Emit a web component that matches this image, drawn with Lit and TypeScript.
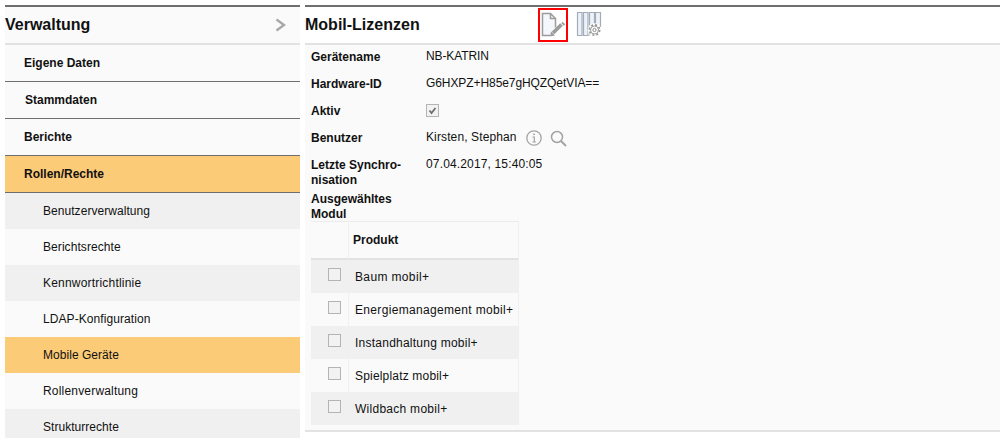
import { LitElement, html, css } from "lit";
import { customElement } from "lit/decorators.js";

const mainItems = [
  { name: "Eigene Daten", indent: 0 },
  { name: "Stammdaten", indent: 1 },
  { name: "Berichte", indent: 0 },
  { name: "Rollen/Rechte", indent: 0 },
];
const subItems = [
  { name: "Benutzerverwaltung", track: 0.05 },
  { name: "Berichtsrechte", track: 0.07 },
  { name: "Kennwortrichtlinie", track: 0.2 },
  { name: "LDAP-Konfiguration", track: 0.08 },
  { name: "Mobile Geräte", track: 0.04 },
  { name: "Rollenverwaltung", track: 0.19 },
  { name: "Strukturrechte", track: 0.04 },
];
const products = [
  { name: "Baum mobil+", track: 0.36 },
  { name: "Energiemanagement mobil+", track: 0.33 },
  { name: "Instandhaltung mobil+", track: 0.24 },
  { name: "Spielplatz mobil+", track: 0.18 },
  { name: "Wildbach mobil+", track: 0.27 },
];

@customElement("app-root")
export class AppRoot extends LitElement {
  static styles = css`
    :host { display: block; width: 1000px; height: 438px; overflow: hidden; background: #fff; color: #111; font-family: "Liberation Sans", Arial, sans-serif; font-size: 12px; }
    * { box-sizing: border-box; }
    .page { display: flex; gap: 5px; height: 438px; padding: 5px 0 0 5px; }
    .side { width: 295px; flex: none; background: #fafafa; border-top: 2px solid #6e6e6e; height: 433px; overflow: hidden; }
    .side-head { height: 38px; display: flex; align-items: center; justify-content: space-between; border-bottom: 2px solid #e2e2e2; font-size: 16px; font-weight: bold; padding: 0 14px 0 0; }
    .main-item { height: 37px; border-bottom: 1px solid #6e6e6e; padding: 0 0 1px 19px; display: flex; align-items: center; font-weight: bold; }
    .main-item.active { background: #fccb78; }
    .main-item.nudge { padding-left: 20px; }
    .sub-item { height: 36px; padding: 0 0 1px 38px; display: flex; align-items: center; flex: none; }
    .sub-item:nth-child(odd) { background: #f0f0f0; }
    .sub-item.active { background: #fccb78; }
    .panel { flex: 1; height: 427px; background: #fafafa; border-top: 2px solid #6e6e6e; border-bottom: 2px solid #e2e2e2; }
    .panel-head { height: 38px; background: #fff; border-bottom: 2px solid #e2e2e2; display: flex; align-items: center; }
    .panel-title { width: 233px; font-size: 16px; font-weight: bold; }
    .tool { width: 30px; height: 34px; display: flex; align-items: center; justify-content: center; }
    .tool.sel { border: 2px solid #f00; }
    .tool + .tool { margin-left: 6px; }
    .body { padding: 0 0 0 6px; }
    .field { display: grid; grid-template-columns: 115px 1fr; }
    .lbl { font-weight: bold; line-height: 15px; }
    .val { display: flex; align-items: flex-start; line-height: 15px; }
    .f1 { height: 28px; padding-top: 5px; }
    .f2 { height: 27px; padding-top: 4px; }
    .f3 { height: 27px; padding-top: 4px; }
    .f4 { height: 27px; padding-top: 4px; }
    .f5 { height: 34px; padding-top: 4px; }
    .f6 { height: 33px; padding-top: 4px; }
    .val.up { margin-top: -1px; }
    .t-name { letter-spacing: -0.1px; }
    .t-id { letter-spacing: -0.08px; }
    .t-user { letter-spacing: 0.12px; }
    .t-date { letter-spacing: 0.15px; }
    .cb { width: 13px; height: 13px; border: 1px solid #b4b4b4; background: #f2f2f2; display: block; }
    .inf { margin-left: 9px; display: block; }
    .srch { margin-left: 8px; display: block; }
    table { border-collapse: separate; border-spacing: 0; width: 208px; }
    th { height: 39px; text-align: left; padding: 0 0 0 4px; border-top: 1px solid #ececec; border-bottom: 2px solid #e2e2e2; }
    th:first-child, td:first-child { width: 38px; border-right: 1px solid #f0f0f0; padding: 0; }
    tr:nth-child(odd) td { background: #f0f0f0; }
    td { height: 33px; padding: 0 0 0 6px; border-right: 1px solid transparent; }
    td .cb { margin: 0 0 4px 17px; }
    th:last-child, td:last-child { border-right: 1px solid #f0f0f0; }
  `;

  render() {
    return html`<div class="page">
      <nav class="side">
        <div class="side-head"><span>Verwaltung</span>
          <svg width="11" height="14" viewBox="0 0 11 14"><path d="M1.500 1.500 9 7 1.500 12.500" fill="none" stroke="#a8a8a8" stroke-width="2.400"/></svg>
        </div>
        ${mainItems.map((m, i) => html`<div class="main-item ${i === 3 ? "active" : ""} ${m.indent ? "nudge" : ""}">${m.name}</div>`)}
        <div>${subItems.map((s, i) => html`<div class="sub-item ${i === 4 ? "active" : ""}" style="letter-spacing:${s.track}px">${s.name}</div>`)}</div>
      </nav>
      <main class="panel">
        <div class="panel-head">
          <div class="panel-title">Mobil-Lizenzen</div>
          <div class="tool sel">
            <svg width="26" height="26" viewBox="0 0 26 26" fill="none">
              <path d="M3 2H10V7H15V16L10 23H3Z" fill="#f4f7fb"/>
              <path d="M10 23.500H2.500V1.500H10.500L15.500 6.500V15.500M10.500 1.500V6.500H15.500" stroke="#9c9c9c" stroke-width="1.500"/>
              <path d="M13 21 21.500 12.500" stroke="#9c9c9c" stroke-width="3.800"/>
              <path d="M10 24.500 11 19.500 15 23.500Z" fill="#9c9c9c"/>
              <path d="M22 10.500 24.500 13" stroke="#9c9c9c" stroke-width="1.800"/>
            </svg>
          </div>
          <div class="tool">
            <svg width="26" height="26" viewBox="0 0 26 26" fill="none">
              <path d="M1.500 0.500H6V23.500H1.500ZM7.500 0.500H12V23.500H7.500Z" fill="#eef2f8" stroke="#a3adba" stroke-width="1.200"/>
              <path d="M13.500 23.500V0.500H18.500V12M19.500 12V0.500H24.500V15" fill="#eef2f8" stroke="#a3adba" stroke-width="1.200"/>
              <circle cx="18.500" cy="18" r="6.800" fill="#fff"/>
              <circle cx="18.500" cy="18" r="5.200" stroke="#929292" stroke-width="1.600" stroke-dasharray="2 2.080"/>
              <circle cx="18.500" cy="18" r="4" stroke="#9a9a9a" stroke-width="1"/>
              <circle cx="18.500" cy="18" r="1.600" stroke="#8e8e8e" stroke-width="1"/>
            </svg>
          </div>
        </div>
        <div class="body">
          <div class="field f1"><div class="lbl">Gerätename</div><div class="val up t-name">NB-KATRIN</div></div>
          <div class="field f2"><div class="lbl">Hardware-ID</div><div class="val up t-id">G6HXPZ+H85e7gHQZQetVIA==</div></div>
          <div class="field f3"><div class="lbl">Aktiv</div><div class="val">
            <span class="cb"><svg width="11" height="11" viewBox="0 0 11 11"><path d="M2.500 5.500 4.500 8 8.500 3" fill="none" stroke="#6f6f6f" stroke-width="1.800"/></svg></span>
          </div></div>
          <div class="field f4"><div class="lbl">Benutzer</div><div class="val up t-user">Kirsten, Stephan
            <svg class="inf" width="16" height="16" viewBox="0 0 16 16" fill="none"><circle cx="8" cy="8" r="7.200" stroke="#a3a3a3" stroke-width="1.300"/><path d="M6.500 7H8.300V12M6.500 12H10" stroke="#a3a3a3" stroke-width="1.200"/><rect x="7.200" y="3.500" width="1.600" height="1.600" fill="#a3a3a3"/></svg>
            <svg class="srch" width="17" height="17" viewBox="0 0 17 17" fill="none"><circle cx="7" cy="7" r="5.500" stroke="#a3a3a3" stroke-width="1.500"/><path d="M11 11 16 16" stroke="#a3a3a3" stroke-width="2"/></svg>
          </div></div>
          <div class="field f5"><div class="lbl">Letzte Synchro-<br>nisation</div><div class="val up t-date">07.04.2017, 15:40:05</div></div>
          <div class="field f6"><div class="lbl">Ausgewähltes<br>Modul</div></div>
          <table>
            <thead><tr><th></th><th>Produkt</th></tr></thead>
            <tbody>${products.map((p) => html`<tr><td><span class="cb"></span></td><td style="letter-spacing:${p.track}px">${p.name}</td></tr>`)}</tbody>
          </table>
        </div>
      </main>
    </div>`;
  }
}
